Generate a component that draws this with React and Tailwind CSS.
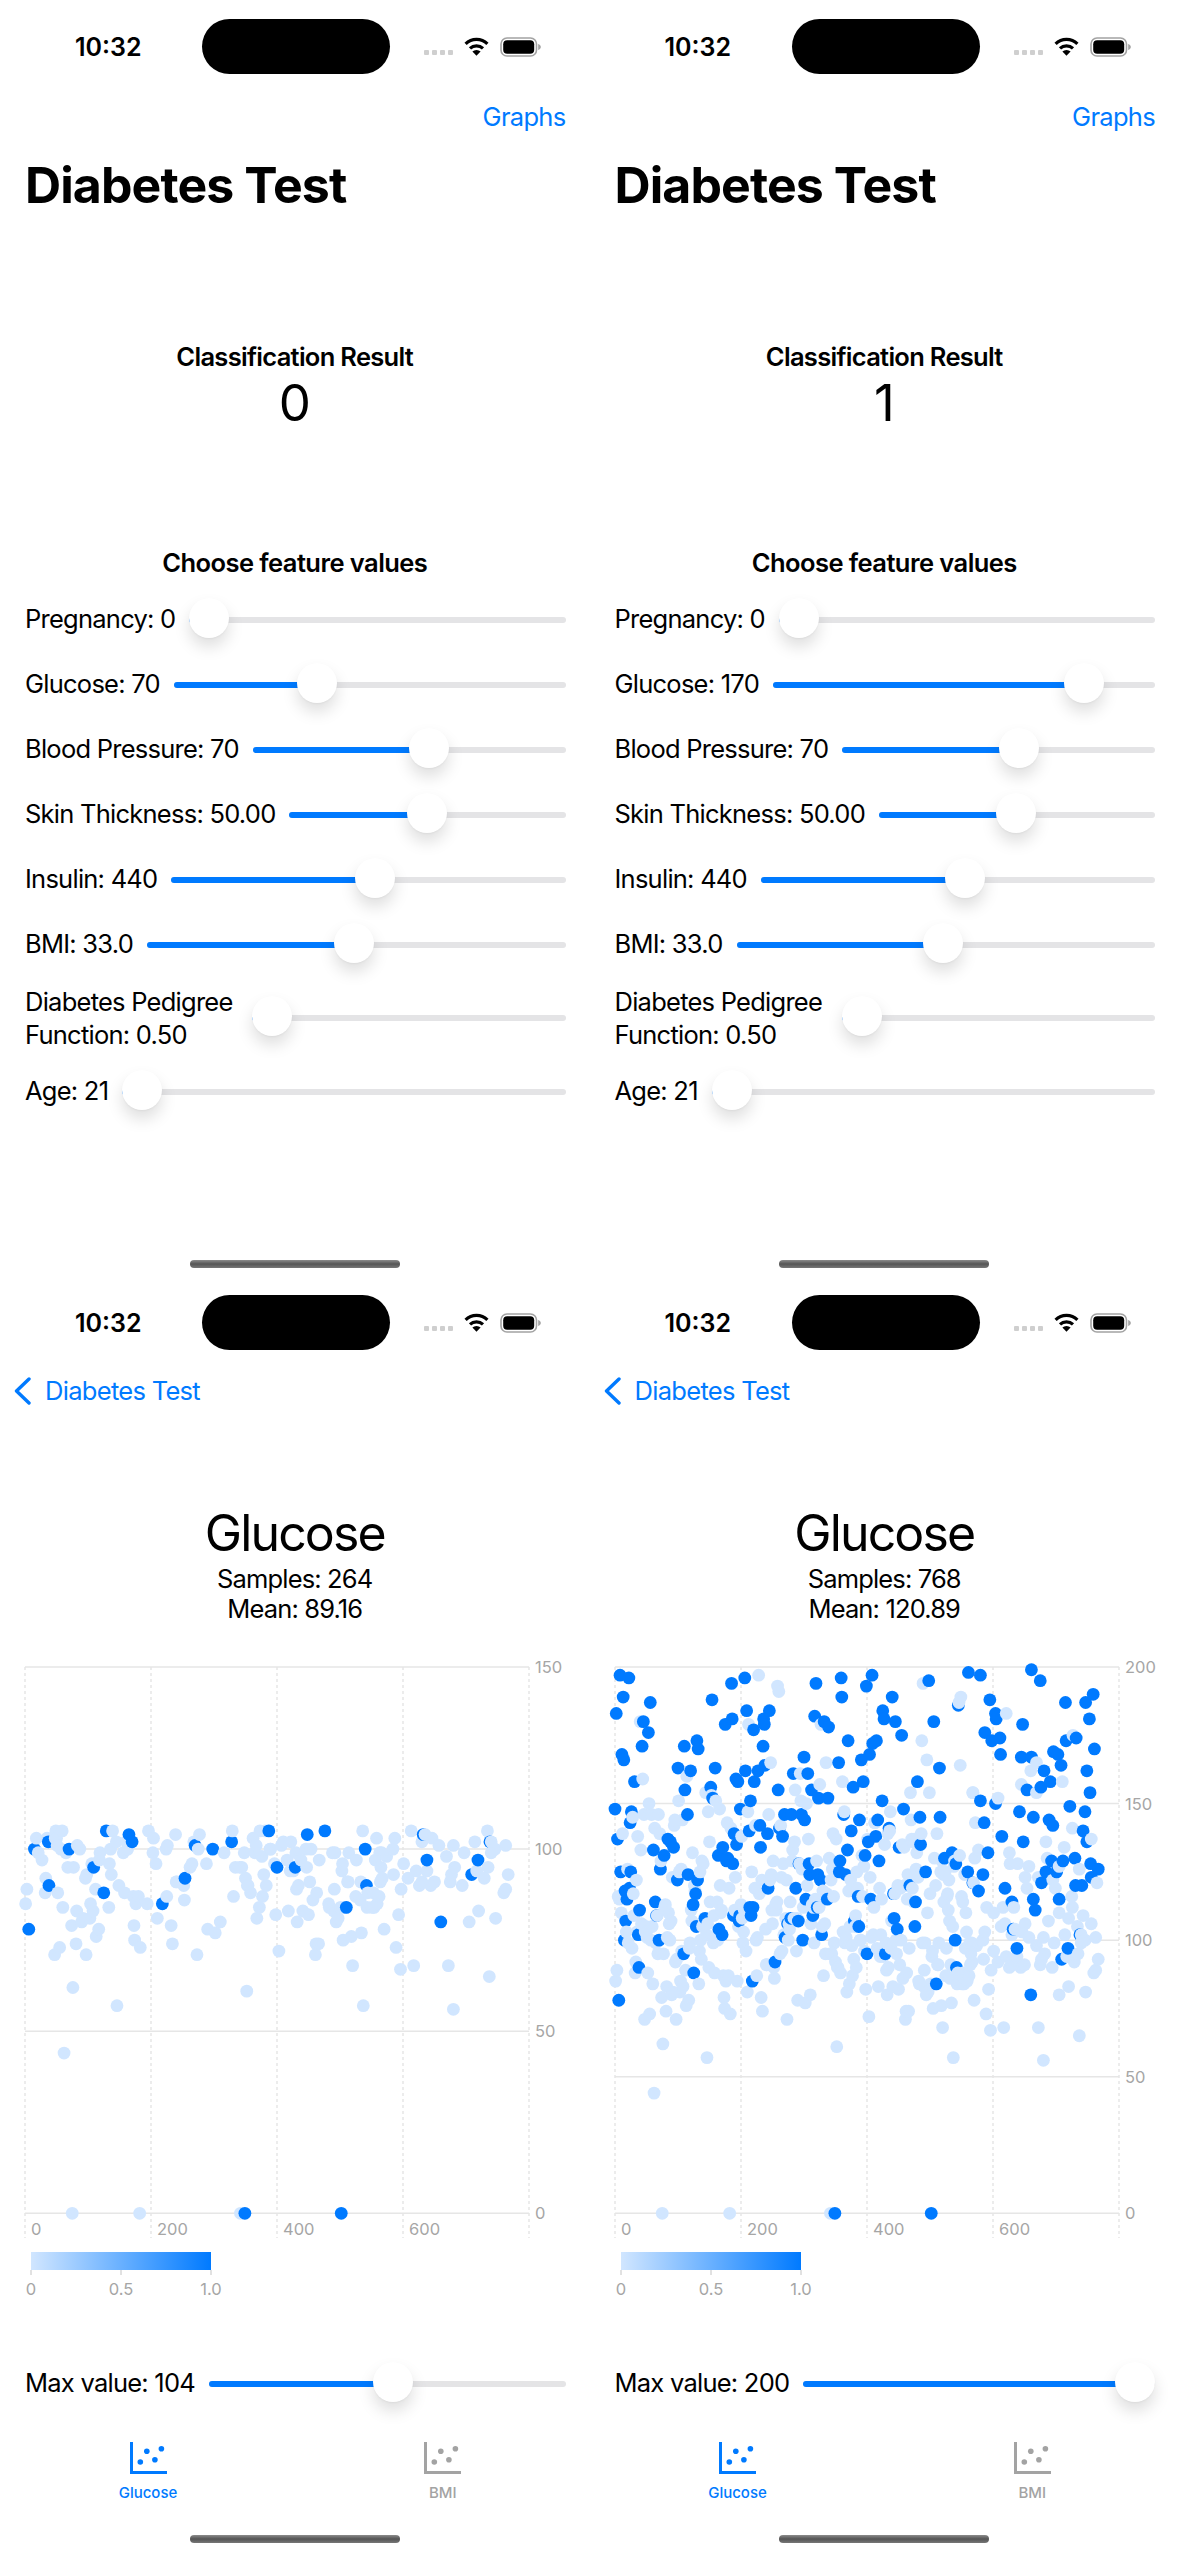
import React from 'react'

// glucose column of the dataset, index is the sample number
const GLUCOSE = [
  148,85,183,89,137,116,78,115,197,125,110,168,139,189,166,100,118,107,103,115,
  126,99,196,119,143,125,147,97,145,117,109,158,88,92,122,103,138,102,90,111,
  180,133,106,171,159,180,146,71,103,105,103,101,88,176,150,73,187,100,146,105,
  84,133,44,141,114,99,109,109,95,146,100,139,126,129,79,0,62,95,131,112,
  113,74,83,101,137,110,106,100,136,107,80,123,81,134,142,144,92,71,93,122,
  163,151,125,81,85,126,96,144,83,95,171,155,89,76,160,146,124,78,97,99,
  162,111,107,132,113,88,120,118,117,105,173,122,170,84,96,125,100,93,129,105,
  128,106,108,108,154,102,57,106,147,90,136,114,156,153,188,152,99,109,88,163,
  151,102,114,100,131,104,148,120,110,111,102,134,87,79,75,179,85,129,143,130,
  87,119,0,73,141,194,181,128,109,139,111,123,159,135,85,158,105,107,109,148,
  113,138,108,99,103,111,196,162,96,184,81,147,179,140,112,151,109,125,85,112,
  177,158,119,142,100,87,101,162,197,117,142,134,79,122,74,171,181,179,164,104,
  91,91,139,119,146,184,122,165,124,111,106,129,90,86,92,113,111,114,193,155,
  191,141,95,142,123,96,138,128,102,146,101,108,122,71,106,100,106,104,114,108,
  146,129,133,161,108,136,155,119,96,108,78,107,128,128,161,151,146,126,100,112,
  167,144,77,115,150,120,161,137,128,124,80,106,155,113,109,112,99,182,115,194,
  129,112,124,152,112,157,122,179,102,105,118,87,180,106,95,165,117,115,152,178,
  130,95,0,122,95,126,139,116,99,0,92,137,61,90,90,165,125,129,88,196,
  189,158,103,146,147,99,124,101,81,133,173,118,84,105,122,140,98,87,156,93,
  107,105,109,90,125,119,116,105,144,100,100,166,131,116,158,127,96,131,82,193,
  95,137,136,72,168,123,115,101,197,172,102,112,143,143,138,173,97,144,83,129,
  119,94,102,115,151,184,94,181,135,95,99,89,80,139,90,141,140,147,97,107,
  189,83,117,108,117,180,100,95,104,120,82,134,91,119,100,175,135,86,148,134,
  120,71,74,88,115,124,74,97,120,154,144,137,119,136,114,137,105,114,126,132,
  158,123,85,84,145,135,139,173,99,194,83,89,99,125,80,166,110,81,195,154,
  117,84,0,94,96,75,180,130,84,120,84,139,91,91,99,163,145,125,76,129,
  68,124,114,130,125,87,97,116,117,111,122,107,86,91,77,132,105,57,127,129,
  100,128,90,84,88,186,187,131,164,189,116,84,114,88,84,124,97,110,103,85,
  125,198,87,99,91,95,99,92,154,121,
]

// outcome of the first 250 samples
const OUTCOME = (
  '1010101011' + '0101111101' + '0011111000' + '0100000111' + '0001010010' + '0001001000' +
  '0100101000' + '1010000010' + '0000100010' + '0001000001' + '1000000001' + '1110011100' +
  '1000110011' + '1110000000' + '0001000000' + '0010110001' + '0000110000' + '1100010101' +
  '0000011111' + '0011010111' + '0000001101' + '0001111011' + '1100000100' + '1100011110' +
  '0011010000'
)

// positive samples at or below the slider limit
const DARK_LOW = [6,15,37,38,70,109,125,129,165,170,218,254,270,298,328,349,387,400,429,448,476,502,510,540,542]

// positive samples from 250 up, read off the chart as [x, y]
const DARK_HIGH = [
  [498,450],[510,523],[533,523],[560,523],[568,540],[505,565],[510,590],[538,400],[576,400],[566,350],
  [585,450],[603,475],[630,475],[598,128],[666,113],[667,170],[595,228],[620,240],[632,262],[658,367],
  [683,302],[748,105],[733,137],[800,170],[776,210],[779,237],[810,245],[826,285],[760,300],[750,310],
  [740,342],[718,358],[724,425],[696,440],[773,482],[831,505],[875,530],[928,530],[897,122],[911,245],
  [926,383],[868,425],[1003,97],[976,195],[714,540],[692,572],[762,540],[757,590],[737,605],[682,630],
  [730,645],[766,662],[662,660],[660,695],[675,700],[792,562],[672,525],[876,612],[816,622],[889,695],
  [940,655],[958,640],[970,672],[1002,695],[552,672],[578,672],[580,702],[604,700],[608,720],[544,745],
  [570,776],[628,776],[590,828],[552,842],[535,835],[520,848],[848,735],[806,762],[710,770],[742,776],
  [806,835],[815,868],[862,858],[712,858],[600,800],
]

const nearestHigh = ([x, y]) => {
  const i = (x - 64) / 1.675
  const v = 200 - (y - 80) / 8.2
  let best = -1
  let bestCost = Infinity
  GLUCOSE.forEach((g, k) => {
    if (k < 250 || g <= 105) return
    const cost = ((k - i) / 2) ** 2 + (g - v) ** 2
    if (cost < bestCost) {
      bestCost = cost
      best = k
    }
  })
  return best
}

const DARK = new Set([...DARK_LOW, ...DARK_HIGH.map(nearestHigh)])

const outcomeOf = (i, v) => {
  if (v > 105 && i < 250) return Number(OUTCOME[i])
  return DARK.has(i) ? 1 : 0
}

// samples past 570 were read off the chart, [x, y, outcome] in chart pixels
const LOW_TAIL = [
  [1005,838,0],[1030,675,0],[1034,565,0],[1028,598,0],[1012,620,0],[1050,718,0],[1057,642,0],[1044,795,0],
  [1037,892,0],[1048,958,0],[1068,685,0],[1077,543,0],[1083,946,0],[1090,660,0],[1105,690,0],[1097,706,0],
  [1105,575,0],[1108,553,1],[1112,553,0],[1118,660,0],[1118,630,1],[1128,706,0],[1130,565,0],[1138,695,0],
  [1148,586,0],[1153,815,1],[1168,618,0],[1174,946,0],[1178,695,0],[1182,672,0],[1186,586,0],[1187,1078,0],
  [1190,650,0],[1210,706,0],[1215,608,0],[1228,815,0],[1235,675,1],[1243,575,0],[1248,665,0],[1251,630,1],
  [1253,783,0],[1268,685,0],[1276,543,0],[1278,652,0],[1281,980,0],[1282,575,1],[1285,575,0],[1285,610,0],
  [1295,597,0],[1297,805,0],[1318,728,0],[1323,716,0],[1323,586,0],[1330,675,0],
].map(([x, y, o]) => [Math.round((x - 66) / 1.648), Math.round(150 - (y - 50) / 10.92), o])

const HIGH_TAIL = [
  [1035,105,1],[1060,178,1],[1075,218,1],[1078,237,1],[1048,275,1],[1066,300,1],[1087,293,1],[1089,342,1],
  [1148,252,1],[1172,88,1],[1195,122,1],[1145,352,1],[1172,350,1],[1205,392,1],[1230,335,1],[1242,343,1],
  [1250,375,1],[1222,425,1],[1197,440,1],[1160,448,1],[1035,482,1],[1075,490,1],[1045,547,1],[1055,637,1],
  [1093,588,1],[1139,515,1],[1177,530,1],[1150,605,1],[1218,540,1],[1228,555,1],[1262,187,1],[1316,187,1],
  [1336,160,1],[1325,237,1],[1263,302,1],[1290,293,1],[1339,325,1],[1318,392,1],[1327,458,1],[1273,497,1],
  [1314,515,1],[1308,572,1],[1318,605,1],[1287,653,1],[1255,660,1],[1225,660,1],[1210,695,1],[1238,695,1],
  [1198,728,1],[1328,670,1],[1348,686,1],[1330,712,1],[1288,737,1],[1305,737,1],[1245,776,1],[1176,776,1],
  [1181,810,1],[1120,785,1],[1100,745,1],[1042,705,1],[1030,752,1],[1016,725,1],
  [1105,218,0],[1282,282,0],[1185,365,0],[1170,392,0],[1145,433,0],[1253,425,0],[1185,458,0],[1082,473,0],
  [1015,458,0],[1022,547,0],[1280,563,0],[1210,605,0],[1258,620,0],[1330,598,0],[1030,630,0],[1113,637,0],
  [1020,655,0],[1115,672,0],[1135,670,0],[1165,680,0],[1155,712,0],[1160,745,0],[1213,655,0],[1245,675,0],
  [1298,687,0],[1190,712,0],[1228,720,0],[1235,745,0],[1278,765,0],[1345,728,0],[1052,800,0],[1095,800,0],
  [1070,815,0],[1125,805,0],[1245,815,0],[1280,800,0],[1100,850,0],[1155,850,0],[1217,843,0],[1270,835,0],
  [1308,825,0],[1330,850,0],
].map(([x, y, o]) => [Math.round((x - 64) / 1.675), Math.round(200 - (y - 80) / 8.2), o])

const SAMPLES = [
  ...GLUCOSE.map((v, i) => [i, v, outcomeOf(i, v)]),
  ...LOW_TAIL,
  ...HIGH_TAIL,
].sort((a, b) => a[0] - b[0])

const BLUE = '#007aff'
const LIGHT = '#d1e6ff'

const Slider = ({ label, fraction, className = '', labelClass = '' }) => (
  <div className={`flex items-center gap-[14px] ${className}`}>
    <div className={`shrink-0 whitespace-nowrap tracking-[-0.75px] ${labelClass}`}>{label}</div>
    <div className="relative flex-1 h-[6px] rounded-full bg-[#e4e4e6]">
      <div
        className="absolute left-0 top-0 h-[6px] rounded-full bg-[#007aff]"
        style={{ width: `calc((100% - 40px) * ${fraction} + 8px)` }}
      />
      <div
        className="absolute top-[-19px] w-[40px] h-[40px] rounded-full bg-white shadow-[0_9px_16px_rgba(0,0,0,0.13),0_1px_2px_rgba(0,0,0,0.04)]"
        style={{ left: `calc((100% - 40px) * ${fraction})` }}
      />
    </div>
  </div>
)

const Wifi = () => (
  <svg width="25" height="19" viewBox="0 0 25 19" className="text-black">
    <path d="M1.6 6.8A15.6 15.6 0 0 1 23.4 6.8" fill="none" stroke="currentColor" strokeWidth="3.2" />
    <path d="M6 11.4A9.4 9.4 0 0 1 19 11.4" fill="none" stroke="currentColor" strokeWidth="3.2" />
    <path d="M12.5 18.8L8.4 14.6A5.8 5.8 0 0 1 16.6 14.6Z" fill="currentColor" />
  </svg>
)

const Battery = () => (
  <svg width="42" height="20" viewBox="0 0 42 20">
    <rect x="1" y="1" width="35.5" height="18" rx="6" fill="none" stroke="#a3a3a3" strokeWidth="1.6" />
    <rect x="3.2" y="3.2" width="31" height="13.6" rx="4" fill="#000" />
    <path d="M38.2 7v6c1.6-.6 2.6-1.700 2.600-3s-1-2.400-2.600-3z" fill="#a3a3a3" />
  </svg>
)

const StatusBar = () => (
  <div className="flex items-center h-[55px] mt-[19px]">
    <div className="ml-[75px] w-[127px] text-[25px] leading-[30px] font-semibold">10:32</div>
    <div className="w-[188px] h-[55px] rounded-full bg-black" />
    <div className="flex gap-[3px] ml-[34px] mt-[11px]">
      {[0, 1, 2, 3].map((d) => (
        <span key={d} className="w-[5px] h-[5px] rounded-[1px] bg-[#cfcfcf]" />
      ))}
    </div>
    <div className="ml-[11px]"><Wifi /></div>
    <div className="ml-[11px]"><Battery /></div>
  </div>
)

const HomeBar = () => (
  <div className="mx-auto w-[210px] h-[8px] rounded-full bg-linear-to-b from-[#8c8c8c] via-[#555555] to-[#777777]" />
)

const FormPhone = ({ result, glucose, glucoseFraction, pregnancy }) => (
  <div className="flex flex-col h-[1276px] text-black">
    <StatusBar />
    <div className="h-[30px] mt-[28px] pr-[24px] text-right text-[25.5px] leading-[30px] tracking-[-0.7px] text-[#007aff]">
      Graphs
    </div>
    <h1 className="h-[60px] mt-[23px] pl-[25px] text-[50px] leading-[60px] font-bold tracking-[-0.9px]">Diabetes Test</h1>
    <div className="h-[30px] mt-[127px] text-center text-[25.5px] leading-[30px] font-semibold tracking-[-0.7px]">
      Classification Result
    </div>
    <div className="h-[60px] mt-[1px] text-center text-[51px] leading-[60px]">{result}</div>
    <div className="h-[30px] mt-[115px] text-center text-[25.5px] leading-[30px] font-semibold tracking-[-0.55px]">
      Choose feature values
    </div>
    <div className="flex flex-col gap-[22px] mt-[20px] pl-[25px] pr-[24px] text-[25.5px]">
      <Slider className="h-[43px]" label={`Pregnancy: ${pregnancy}`} fraction={0} />
      <Slider className="h-[43px]" label={`Glucose: ${glucose}`} fraction={glucoseFraction} />
      <Slider className="h-[43px]" label="Blood Pressure: 70" fraction={0.574} />
      <Slider className="h-[43px]" label="Skin Thickness: 50.00" fraction={0.497} />
      <Slider className="h-[43px]" label="Insulin: 440" fraction={0.519} />
      <Slider className="h-[43px]" label="BMI: 33.0" fraction={0.493} />
      <Slider
        className="h-[66px] -my-[3px]"
        labelClass="w-[213px] leading-[33px]"
        label={<><div>Diabetes Pedigree</div><div>Function: 0.50</div></>}
        fraction={0}
      />
      <Slider className="h-[43px]" label="Age: 21" fraction={0} />
    </div>
    <div className="mt-auto mb-[8px]"><HomeBar /></div>
  </div>
)

const ScatterChart = ({ yMax, ticks, data }) => {
  const left = 25
  const right = 529
  const top = 7
  const zero = 553.3
  const bottom = 578
  const sx = (i) => left + (i * (right - left)) / 800
  const sy = (v) => zero - (v * (zero - top)) / yMax
  const gradId = `legend-${yMax}`
  return (
    <svg width="589" height="650" viewBox="0 -10 589 650" className="block font-['Inter',sans-serif]">
      <defs>
        <linearGradient id={gradId} x1="0" x2="1" y1="0" y2="0">
          <stop offset="0" stopColor={LIGHT} />
          <stop offset="1" stopColor={BLUE} />
        </linearGradient>
      </defs>

      {[0, 200, 400, 600, 800].map((i) => (
        <line key={i} x1={sx(i)} x2={sx(i)} y1={top} y2={bottom} stroke="#d9d9d9" strokeWidth="1" strokeDasharray="3 3" />
      ))}
      {ticks.map((t) => (
        <g key={t}>
          <line x1={left} x2={right} y1={sy(t)} y2={sy(t)} stroke="#e6e6e6" strokeWidth="1.5" />
          <text x={right + 6} y={sy(t) + 6} fontSize="16.5" fill="#a6a6a6">{t}</text>
        </g>
      ))}
      {[0, 200, 400, 600].map((i) => (
        <text key={i} x={sx(i) + 6} y="575" fontSize="16.5" fill="#a6a6a6">{i}</text>
      ))}

      {data.map(([i, v, o], k) => (
        <circle key={k} cx={sx(i)} cy={sy(v)} r="6.4" fill={o ? BLUE : LIGHT} />
      ))}

      <rect x="31" y="592" width="180" height="18" fill={`url(#${gradId})`} />
      {[31, 121, 211].map((x) => (
        <line key={x} x1={x} x2={x} y1="610" y2="615" stroke="#c4c4c4" strokeWidth="1" />
      ))}
      <text x="31" y="635" fontSize="16.5" fill="#a6a6a6" textAnchor="middle">0</text>
      <text x="121" y="635" fontSize="16.5" fill="#a6a6a6" textAnchor="middle">0.5</text>
      <text x="211" y="635" fontSize="16.5" fill="#a6a6a6" textAnchor="middle">1.0</text>
    </svg>
  )
}

const TabIcon = ({ color }) => (
  <svg width="37" height="32" viewBox="0 0 37 32">
    <path d="M1.500 0V30.500H37" fill="none" stroke={color} strokeWidth="3" />
    <circle cx="10.300" cy="20" r="2.800" fill={color} />
    <circle cx="24.900" cy="17.700" r="2.800" fill={color} />
    <circle cx="16.800" cy="9.300" r="2.800" fill={color} />
    <circle cx="31.400" cy="6.700" r="2.800" fill={color} />
  </svg>
)

const GraphPhone = ({ samples, mean, maxLabel, fraction, yMax, ticks, data }) => (
  <div className="flex flex-col h-[1280px] text-black">
    <StatusBar />
    <div className="flex items-center h-[30px] mt-[26px] pl-[14px] text-[25.5px] leading-[30px] tracking-[-0.7px] text-[#007aff]">
      <svg width="17" height="28" viewBox="0 0 17 28" fill="none" stroke="#007aff" strokeWidth="3.4" strokeLinecap="round" strokeLinejoin="round">
        <path d="M15 2L2.500 14L15 26" />
      </svg>
      <span className="ml-[14px]">Diabetes Test</span>
    </div>
    <div className="h-[60px] mt-[97px] text-center text-[50px] leading-[60px] tracking-[-1.9px]">Glucose</div>
    <div className="h-[30px] mt-[1px] text-center text-[25.5px] leading-[30px] tracking-[-0.85px]">Samples: {samples}</div>
    <div className="h-[30px] text-center text-[25.5px] leading-[30px] tracking-[-0.85px]">Mean: {mean}</div>
    <div className="mt-[26px]">
      <ScatterChart yMax={yMax} ticks={ticks} data={data} />
    </div>
    <div className="mt-[62px] pl-[25px] pr-[24px] text-[25.5px]">
      <Slider className="h-[43px]" label={maxLabel} fraction={fraction} />
    </div>
    <div className="grid grid-cols-2 mt-[37px]">
      <div className="flex flex-col items-center w-[296px]">
        <TabIcon color="#007aff" />
        <div className="mt-[9px] text-[15px] leading-[20px] font-medium text-[#007aff]">Glucose</div>
      </div>
      <div className="flex flex-col items-center w-[296px]">
        <TabIcon color="#a3a3a3" />
        <div className="mt-[9px] text-[15px] leading-[20px] font-medium text-[#a3a3a3]">BMI</div>
      </div>
    </div>
    <div className="mt-auto mb-[13px]"><HomeBar /></div>
  </div>
)

export default function App() {
  const low = SAMPLES.filter((s) => s[1] <= 105)
  return (
    <div className="grid grid-cols-2 w-[1179px] h-[2556px] overflow-hidden bg-white font-['Inter','Noto_Sans',sans-serif]">
      <FormPhone result="0" pregnancy={0} glucose={70} glucoseFraction={0.35} />
      <FormPhone result="1" pregnancy={0} glucose={170} glucoseFraction={0.85} />
      <GraphPhone
        samples={264}
        mean="89.16"
        maxLabel="Max value: 104"
        fraction={0.517}
        yMax={150}
        ticks={[0, 50, 100, 150]}
        data={low}
      />
      <GraphPhone
        samples={768}
        mean="120.89"
        maxLabel="Max value: 200"
        fraction={1}
        yMax={200}
        ticks={[0, 50, 100, 150, 200]}
        data={SAMPLES}
      />
    </div>
  )
}
